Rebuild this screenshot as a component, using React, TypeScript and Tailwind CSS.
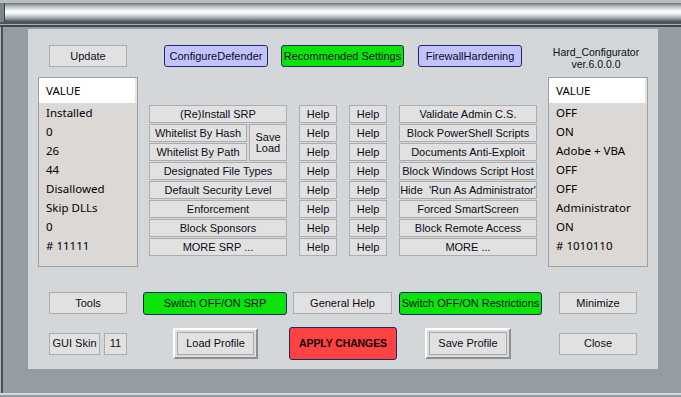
import React from "react";

const plain =
  "flex items-center justify-center border border-[#adadad] bg-[#e1e1e1] text-[11px] leading-none text-[#0c0c18] whitespace-nowrap overflow-hidden";
const blue =
  "flex items-center justify-center rounded-[3px] border border-[#1b2a63] bg-[#c2c2ff] text-[11px] leading-none text-[#0c0c18] whitespace-nowrap";
const green =
  "flex items-center justify-center rounded-[3px] border border-[#1b2a63] bg-[#0ae40a] text-[11px] leading-none text-[#0c0c18] whitespace-nowrap";

const leftValues = ["Installed", "0", "26", "44", "Disallowed", "Skip DLLs", "0", "# 11111"];
const rightValues = ["OFF", "ON", "Adobe + VBA", "OFF", "OFF", "Administrator", "ON", "# 1010110"];

const srpRows = [
  "Designated File Types",
  "Default Security Level",
  "Enforcement",
  "Block Sponsors",
  "MORE SRP ...",
];

const restrictionRows = [
  "Validate Admin C.S.",
  "Block PowerShell Scripts",
  "Documents Anti-Exploit",
  "Block Windows Script Host",
  "Hide  'Run As Administrator'",
  "Forced SmartScreen",
  "Block Remote Access",
  "MORE ...",
];

function ValueList({ values }: { values: string[] }) {
  return (
    <div className="h-[190px] w-[100px] border border-[#a0a0a0] bg-[#dbd8d5] font-['Noto_Sans',sans-serif] text-[11.5px] text-black">
      <div className="flex h-[25px] items-center border-r-2 border-[#e4e4e4] bg-white pl-[7px]">VALUE</div>
      {values.map((v, i) => (
        <div key={i} className="flex h-[19px] items-center pl-[7px] whitespace-nowrap">
          {v}
        </div>
      ))}
    </div>
  );
}

function HelpColumn() {
  return (
    <div className="flex w-[38px] flex-col gap-[1px]">
      {Array.from({ length: 8 }).map((_, i) => (
        <div key={i} className={`${plain} h-[18px]`}>
          Help
        </div>
      ))}
    </div>
  );
}

function RaisedButton({ label, w }: { label: string; w: string }) {
  return (
    <div
      className={`flex h-[31px] ${w} border-2 border-t-white border-l-white border-b-[#8f8f8f] border-r-[#8f8f8f] bg-[#dcdcdc] p-[2px]`}
    >
      <div className="flex flex-1 items-center justify-center border border-[#a8a8a8] bg-[#e1e1e1] text-[11px] leading-none text-[#0c0c18]">
        {label}
      </div>
    </div>
  );
}

export default function App() {
  return (
    <div className="flex h-[397px] w-[681px] flex-col overflow-hidden bg-[#969ca3] font-['Liberation_Sans',Arial,sans-serif]">
      {/* Title bar */}
      <div className="h-[3px] bg-[#b9bec3]" />
      <div className="flex h-[19px] bg-[#7d848b]">
        <div className="ml-[4px] flex-1 border-l border-[#39414a] bg-[linear-gradient(to_bottom,#6f777f_0%,#c4c9ce_22%,#ffffff_45%,#eceef0_58%,#979ea5_82%,#3f474f_100%)]" />
      </div>
      <div className="h-[2px] bg-[#4d555d]" />
      <div className="h-[1px] bg-[#a9afb5]" />
      <div className="h-[2px] bg-[#3e464e]" />

      {/* Window body */}
      <div className="flex h-[366px]">
        <div className="w-[1px] bg-[#aeb4ba]" />
        <div className="w-[2px] bg-[#47515b]" />
        <div className="pl-[25px] pt-[2px]">
          <div className="flex h-[340px] w-[630px] flex-col bg-[#d3d7da] pt-[16px]">
            {/* Top row */}
            <div className="flex h-[32px] items-start">
              <div className={`${plain} ml-[21px] h-[22px] w-[78px]`}>Update</div>
              <div className={`${blue} ml-[37px] h-[22px] w-[104px]`}>ConfigureDefender</div>
              <div className={`${green} ml-[13px] h-[22px] w-[123px]`}>Recommended Settings</div>
              <div className={`${blue} ml-[14px] h-[22px] w-[104px]`}>FirewallHardening</div>
              <div className="ml-[24px] w-[100px] pt-[1px] text-center text-[10.5px] leading-[12px] text-[#0c0c18]">
                <div>Hard_Configurator</div>
                <div>ver.6.0.0.0</div>
              </div>
            </div>

            {/* Main area */}
            <div className="flex h-[190px]">
              <div className="ml-[10px]">
                <ValueList values={leftValues} />
              </div>
              <div className="ml-[11px] mt-[28px] flex gap-[12px]">
                <div className="flex w-[138px] flex-col gap-[1px]">
                  <div className={`${plain} h-[18px]`}>(Re)Install SRP</div>
                  <div className="flex h-[37px] gap-[2px]">
                    <div className="flex w-[98px] flex-col gap-[1px]">
                      <div className={`${plain} h-[18px]`}>Whitelist By Hash</div>
                      <div className={`${plain} h-[18px]`}>Whitelist By Path</div>
                    </div>
                    <div className={`${plain} h-[37px] w-[38px] flex-col leading-[12px]`}>
                      <span>Save</span>
                      <span>Load</span>
                    </div>
                  </div>
                  {srpRows.map((r) => (
                    <div key={r} className={`${plain} h-[18px]`}>
                      {r}
                    </div>
                  ))}
                </div>
                <HelpColumn />
                <HelpColumn />
                <div className="flex w-[138px] flex-col gap-[1px]">
                  {restrictionRows.map((r) => (
                    <div key={r} className={`${plain} h-[18px] whitespace-pre`}>
                      {r}
                    </div>
                  ))}
                </div>
              </div>
              <div className="ml-[11px]">
                <ValueList values={rightValues} />
              </div>
            </div>

            {/* Tools row */}
            <div className="mt-[25px] flex h-[23px] items-start">
              <div className={`${plain} ml-[21px] h-[22px] w-[78px]`}>Tools</div>
              <div className={`${green} ml-[16px] h-[23px] w-[144px]`}>Switch OFF/ON SRP</div>
              <div className={`${plain} ml-[6px] h-[22px] w-[99px]`}>General Help</div>
              <div className={`${green} ml-[7px] h-[23px] w-[143px]`}>Switch OFF/ON Restrictions</div>
              <div className={`${plain} ml-[17px] h-[22px] w-[78px]`}>Minimize</div>
            </div>

            {/* Bottom row */}
            <div className="mt-[12px] flex h-[33px] items-center">
              <div className={`${plain} ml-[21px] h-[22px] w-[51px]`}>GUI Skin</div>
              <div className={`${plain} ml-[4px] h-[22px] w-[23px]`}>11</div>
              <div className="ml-[46px]">
                <RaisedButton label="Load Profile" w="w-[85px]" />
              </div>
              <div className="ml-[31px] flex h-[33px] w-[108px] items-center justify-center rounded-[3px] border border-[#1b2a63] bg-[#ff4343] text-[10.5px] font-bold leading-none tracking-[-0.1px] text-[#140000]">
                APPLY CHANGES
              </div>
              <div className="ml-[28px]">
                <RaisedButton label="Save Profile" w="w-[86px]" />
              </div>
              <div className={`${plain} ml-[48px] h-[22px] w-[78px]`}>Close</div>
            </div>
          </div>
        </div>
      </div>

      {/* Bottom edge */}
      <div className="h-[2px] bg-[#d5d9dc]" />
      <div className="flex-1 bg-[#969ca3]" />
    </div>
  );
}
